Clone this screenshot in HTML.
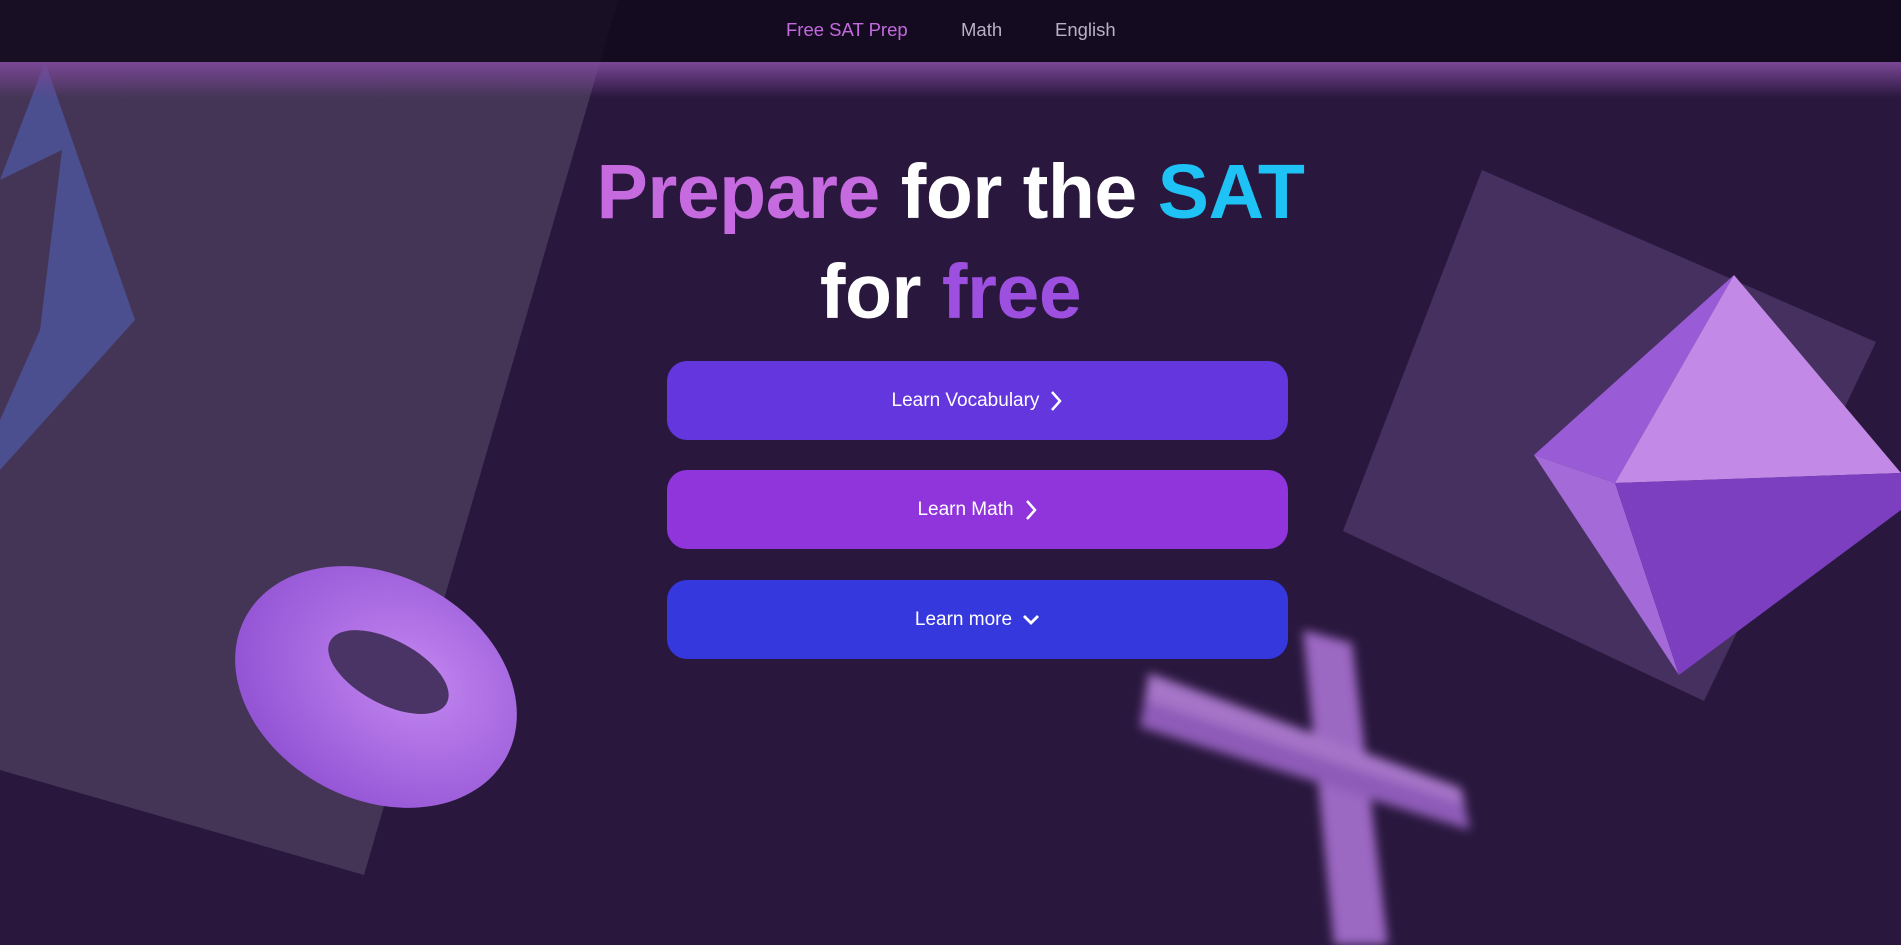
<!DOCTYPE html>
<html><head><meta charset="utf-8"><style>
*{margin:0;padding:0;box-sizing:border-box}
body{width:1901px;height:945px;overflow:hidden;background:#29173d;font-family:"Liberation Sans",sans-serif;position:relative}
svg.bg{position:absolute;left:0;top:0}
nav{position:absolute;left:0;top:0;width:1901px;height:62px;background:rgba(18,10,30,0.88);}
nav a{position:absolute;top:19px;font-size:18.5px;color:#b8b0c4;text-decoration:none}
.band{position:absolute;left:0;top:62px;width:1901px;height:36px;background:linear-gradient(#7a4796,rgba(122,71,150,0))}
h1{position:absolute;left:0;width:1901px;text-align:center;font-size:77px;font-weight:bold;color:#fff;line-height:100px;letter-spacing:-0.5px}
.btn{position:absolute;left:667px;width:621px;height:79px;border-radius:20px;color:#fff;font-size:19px;display:flex;align-items:center;justify-content:center;gap:10px}
</style></head><body>
<svg class="bg" width="1901" height="945" viewBox="0 0 1901 945">
<defs>
<radialGradient id="tg" cx="0.6" cy="0.4" r="0.7"><stop offset="0" stop-color="#c487f0"/><stop offset="1" stop-color="#8e4fd2"/></radialGradient>
<filter id="bl"><feGaussianBlur stdDeviation="5"/></filter>
</defs>
<polygon points="0,0 618,0 364,875 0,770" fill="#ffffff" opacity="0.13"/>
<path d="M45,62 L135,320 L0,470 L0,420 L40,330 L62,150 L0,180 Z" fill="#4f5aa8" opacity="0.7"/>
<polygon points="1482,170 1876,342 1704,701 1343,531" fill="#45305f"/>
<polygon points="1734,275 1534,455 1615,483" fill="#9a5bd6"/>
<polygon points="1734,275 1901,473 1615,483" fill="#c28ae6"/>
<polygon points="1534,455 1615,483 1679,675" fill="#a36ad8"/>
<polygon points="1615,483 1901,473 1901,510 1679,675" fill="#7b3fc0"/>
<g filter="url(#bl)">
<polygon points="1303,630 1352,643 1388,945 1334,945" fill="#9b68c2"/>
<polygon points="1149,673 1461,788 1470,830 1140,727" fill="#8e5cb8"/>
<polygon points="1149,673 1461,788 1465,805 1145,700" fill="#a574c8"/>
</g>
<g transform="rotate(28 376 687)">
<ellipse cx="376" cy="687" rx="148" ry="112" fill="url(#tg)"/>
<ellipse cx="380" cy="668" rx="66" ry="32" fill="#4a3466"/>
</g>
</svg>
<nav>
<a style="left:786px;color:#c46ae0">Free SAT Prep</a>
<a style="left:961px">Math</a>
<a style="left:1055px">English</a>
</nav>
<div class="band"></div>
<h1 style="top:142px"><span style="color:#c66ae0">Prepare</span> for the <span style="color:#1ec2f5">SAT</span></h1>
<h1 style="top:242px">for <span style="color:#9d50e0">free</span></h1>
<div class="btn" style="top:361px;background:#6336de">Learn Vocabulary <svg width="14" height="22" viewBox="0 0 14 22"><path d="M3 2l8 9-8 9" fill="none" stroke="#fff" stroke-width="2.5"/></svg></div>
<div class="btn" style="top:470px;background:#9035dc">Learn Math <svg width="14" height="22" viewBox="0 0 14 22"><path d="M3 2l8 9-8 9" fill="none" stroke="#fff" stroke-width="2.5"/></svg></div>
<div class="btn" style="top:580px;background:#3438dd">Learn more <svg width="18" height="12" viewBox="0 0 18 12"><path d="M2 2l7 7 7-7" fill="none" stroke="#fff" stroke-width="2.8"/></svg></div>
</body></html>
